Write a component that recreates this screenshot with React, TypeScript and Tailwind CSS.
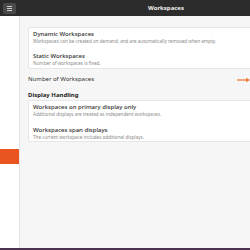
import React from "react";

function Row({ title, sub }: { title: string; sub: string }) {
  return (
    <div className="flex flex-col px-[4px]">
      <div className="text-[6px] leading-[7px] h-[7px] text-[#2e2e2e] font-medium whitespace-nowrap">{title}</div>
      <div className="text-[4.6px] leading-[6px] h-[6px] text-[#8a8a8a] whitespace-nowrap">{sub}</div>
    </div>
  );
}

export default function App() {
  return (
    <div
      className="w-[250px] h-[250px] overflow-hidden flex flex-col bg-white"
      style={{ fontFamily: '"Noto Sans", "Open Sans", sans-serif' }}
    >
      <div className="h-[16px] bg-[#2c2c2c] flex items-center relative shrink-0">
        <div className="ml-[3px] w-[13px] h-[11px] rounded-[2px] bg-[#4a4a4a] flex flex-col items-center justify-center gap-[1px]">
          <div className="w-[5px] h-[1px] bg-[#d0d0d0]" />
          <div className="w-[5px] h-[1px] bg-[#d0d0d0]" />
          <div className="w-[5px] h-[1px] bg-[#d0d0d0]" />
        </div>
        <div className="absolute left-[148px] top-0 h-[16px] flex items-center text-[6px] font-bold text-[#f2f2f2]">
          Workspaces
        </div>
      </div>
      <div className="flex flex-1 min-h-0">
        <div className="w-[20px] shrink-0 bg-white border-r border-[#e3e3e3] flex flex-col">
          <div className="mt-[133px] h-[15px] w-[19px] bg-[#e95420]" />
        </div>
        <div className="flex-1 min-w-0 bg-[#f6f6f6] pl-[8px] pt-[11px] flex flex-col overflow-hidden">
          <div className="w-[260px] bg-white border border-[#e6e6e6] rounded-[2px] pt-[3px] pb-[2px] flex flex-col gap-[9px]">
            <Row
              title="Dynamic Workspaces"
              sub="Workspaces can be created on demand, and are automatically removed when empty."
            />
            <Row title="Static Workspaces" sub="Number of workspaces is fixed." />
          </div>
          <div className="mt-[7px] flex items-center h-[7px] relative">
            <div className="text-[6px] leading-[7px] text-[#333] whitespace-nowrap">Number of Workspaces</div>
            <svg className="absolute left-[209px] top-[0.5px]" width="14" height="6" viewBox="0 0 14 6">
              <line x1="0" y1="3" x2="10" y2="3" stroke="#f07a3a" strokeWidth="1.3" />
              <path d="M9 0.8 L13 3 L9 5.2 Z" fill="#f07a3a" />
            </svg>
          </div>
          <div className="mt-[9px] text-[6px] leading-[7px] font-bold text-[#222] whitespace-nowrap">Display Handling</div>
          <div className="mt-[1px] w-[260px] bg-white border border-[#e6e6e6] rounded-[2px] pt-[3px] pb-[1px] flex flex-col gap-[10px]">
            <Row
              title="Workspaces on primary display only"
              sub="Additional displays are treated as independent workspaces."
            />
            <Row
              title="Workspaces span displays"
              sub="The current workspace includes additional displays."
            />
          </div>
        </div>
      </div>
      <div className="h-[2px] bg-[#4a3350] shrink-0" />
    </div>
  );
}
